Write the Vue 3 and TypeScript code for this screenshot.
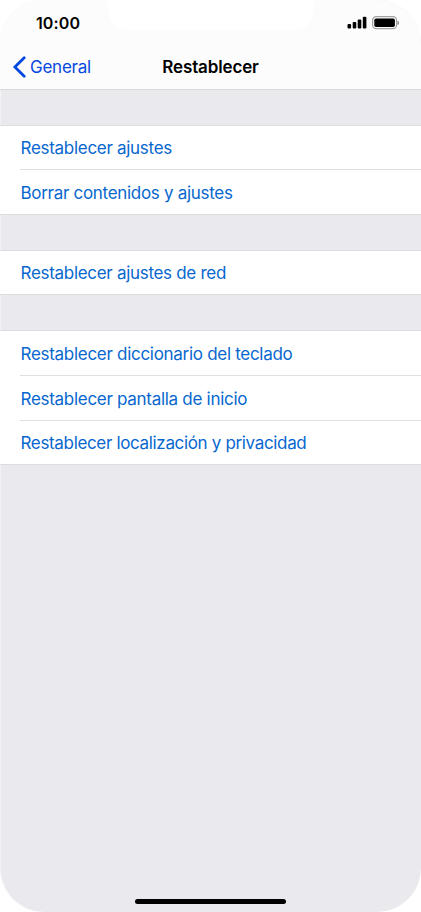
<script setup lang="ts">
interface Action {
  label: string
  spacing: string
}

const groups: Action[][] = [
  [
    { label: 'Restablecer ajustes', spacing: '-0.29px' },
    { label: 'Borrar contenidos y ajustes', spacing: '-0.3px' },
  ],
  [{ label: 'Restablecer ajustes de red', spacing: '-0.3px' }],
  [
    { label: 'Restablecer diccionario del teclado', spacing: '-0.29px' },
    { label: 'Restablecer pantalla de inicio', spacing: '-0.29px' },
    { label: 'Restablecer localización y privacidad', spacing: '-0.34px' },
  ],
]
</script>

<template>
  <div class="phone">
    <header class="header">
      <svg class="notch" width="216" height="30" viewBox="0 0 216 30">
        <path d="M0 0C4 0 5.500 3 5.500 8C5.500 21 12 29.500 26 29.500H190C204 29.500 210.500 21 210.500 8C210.500 3 212 0 216 0Z" fill="#fff" />
      </svg>
      <div class="status">
        <span class="time">10:00</span>
        <svg class="indicators" width="54" height="14" viewBox="0 0 54 14">
          <rect x="0.500" y="8" width="3.600" height="4.600" rx="1" />
          <rect x="5.700" y="6" width="3.600" height="6.600" rx="1" />
          <rect x="10.700" y="3.600" width="3.600" height="9" rx="1" />
          <rect x="15.800" y="0.800" width="3.600" height="11.800" rx="1" />
          <rect x="25.600" y="0.700" width="24" height="12" rx="3.600" fill="none" stroke="#a3a3a3" stroke-width="1.200" />
          <rect x="27.300" y="2.400" width="20.600" height="8.600" rx="1.800" />
          <path d="M50.500 4.700C52.500 5.300 52.500 8.500 50.500 9.100Z" fill="#888" />
        </svg>
      </div>
      <nav class="nav">
        <a class="back">
          <svg width="14" height="22" viewBox="0 0 14 22">
            <path d="M12.200 1.700L2.900 11L12.200 20.300" fill="none" stroke="#0548e0" stroke-width="2.800" stroke-linecap="round" stroke-linejoin="miter" />
          </svg>
          <span>General</span>
        </a>
        <h1 class="title">Restablecer</h1>
      </nav>
    </header>
    <main class="groups">
      <ul v-for="(group, index) in groups" :key="index" class="group">
        <li v-for="action in group" :key="action.label" class="row">
          <span :style="{ letterSpacing: action.spacing }">{{ action.label }}</span>
        </li>
      </ul>
    </main>
    <footer class="footer"><div class="home" /></footer>
  </div>
</template>

<style>
body {
  background: #fff;
}
</style>

<style scoped>
.phone {
  box-sizing: border-box;
  width: 421px;
  height: 912px;
  display: flex;
  flex-direction: column;
  overflow: hidden;
  border-radius: 44px;
  background: #eae9ee;
  box-shadow: inset 1px 0 #f3f2f5;
  font-family: Inter, sans-serif;
}
.header {
  box-sizing: border-box;
  position: relative;
  height: 90px;
  background: #fcfcfc;
  border-bottom: 1px solid #d8d8da;
}
.notch {
  position: absolute;
  left: 103px;
  top: 0;
}
.status {
  box-sizing: border-box;
  height: 45px;
  display: flex;
  justify-content: space-between;
  align-items: center;
  padding: 1px 20px 0 36px;
}
.time {
  font-size: 16px;
  font-weight: 600;
  line-height: 20px;
  letter-spacing: 0.1px;
}
.nav {
  height: 44px;
  display: grid;
  grid-template-columns: 1fr auto 1fr;
  align-items: center;
}
.back {
  display: flex;
  align-items: center;
  gap: 4px;
  padding-left: 12px;
  color: #0548e0;
  font-size: 17px;
  line-height: 22px;
  letter-spacing: -0.25px;
}
.title {
  margin: 0;
  font-size: 17px;
  font-weight: 600;
  line-height: 22px;
  letter-spacing: -0.15px;
}
.groups {
  display: flex;
  flex-direction: column;
  gap: 35px;
  padding-top: 35px;
}
.group {
  margin: 0;
  padding: 0 0 0 20px;
  list-style: none;
  background: #fff;
  border-top: 1px solid #dddde0;
  border-bottom: 1px solid #dddde0;
}
.row {
  box-sizing: border-box;
  height: 43px;
  display: flex;
  align-items: center;
  padding: 2px 0 0 0.5px;
  color: #0867cf;
  font-size: 17px;
  line-height: 21px;
  white-space: nowrap;
}
.row + .row {
  height: 45px;
  border-top: 1px solid #e0e0e2;
}
.group:last-child .row {
  height: 44px;
}
.group:last-child .row:nth-child(2) {
  height: 45px;
}
.footer {
  margin-top: auto;
  display: flex;
  justify-content: center;
  padding-bottom: 8px;
}
.home {
  width: 151px;
  height: 5px;
  border-radius: 3px;
  background: #000;
}
</style>
